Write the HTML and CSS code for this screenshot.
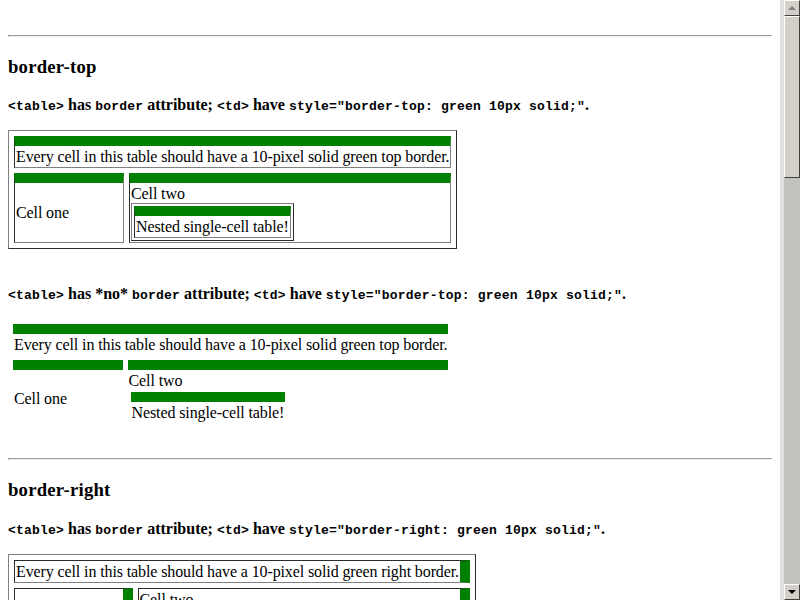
FILE: index.html
```html
<!DOCTYPE html>
<html>
<head>
<meta charset="utf-8">
<title>border-top / border-right on table cells</title>
<link rel="stylesheet" href="styles.css">
</head>
<body>
<div class="window">
  <div class="page">
    <br>
    <hr>
    <h3 class="title">border-top</h3>
    <p class="desc"><code>&lt;table&gt;</code> has <code>border</code> attribute; <code>&lt;td&gt;</code> have <code>style="border-top: green 10px solid;"</code>.</p>
    <table class="outer bordered top">
      <tr><td colspan="2">Every cell in this table should have a 10-pixel solid green top border.</td></tr>
      <tr>
        <td>Cell one</td>
        <td>Cell two<table class="nested bordered top"><tr><td>Nested single-cell table!</td></tr></table></td>
      </tr>
    </table>
    <br>
    <p class="desc"><code>&lt;table&gt;</code> has *no* <code>border</code> attribute; <code>&lt;td&gt;</code> have <code>style="border-top: green 10px solid;"</code>.</p>
    <table class="outer top">
      <tr><td colspan="2">Every cell in this table should have a 10-pixel solid green top border.</td></tr>
      <tr>
        <td>Cell one</td>
        <td>Cell two<table class="nested top"><tr><td>Nested single-cell table!</td></tr></table></td>
      </tr>
    </table>
    <br>
    <hr>
    <h3 class="title">border-right</h3>
    <p class="desc"><code>&lt;table&gt;</code> has <code>border</code> attribute; <code>&lt;td&gt;</code> have <code>style="border-right: green 10px solid;"</code>.</p>
    <table class="outer bordered right">
      <tr><td colspan="2">Every cell in this table should have a 10-pixel solid green right border.</td></tr>
      <tr>
        <td>Cell one</td>
        <td>Cell two<table class="nested bordered right"><tr><td>Nested single-cell table!</td></tr></table></td>
      </tr>
    </table>
    <br>
    <p class="desc"><code>&lt;table&gt;</code> has *no* <code>border</code> attribute; <code>&lt;td&gt;</code> have <code>style="border-right: green 10px solid;"</code>.</p>
  </div>
  <div class="scrollbar">
    <div class="sb-btn"><span class="arrow-up"></span></div>
    <div class="sb-thumb"></div>
    <div class="sb-track"></div>
    <div class="sb-btn"><span class="arrow-down"></span></div>
  </div>
</div>
</body>
</html>
```
FILE: styles.css
```css
html, body {
  margin: 0;
  padding: 0;
  overflow: hidden;
  background: #ffffff;
}

body {
  font-family: "Liberation Serif", "Times New Roman", serif;
  font-size: 16px;
  line-height: 19px;
  letter-spacing: -0.11px;
  color: #000000;
}

.window {
  display: flex;
  height: 600px;
  overflow: hidden;
}

.page {
  flex: 1;
  min-width: 0;
  padding: 8px;
  overflow: hidden;
}

.title {
  font-size: 18.72px;
  line-height: 21px;
  letter-spacing: 0.2px;
  font-weight: bold;
  margin: 18.72px 0;
}

.desc {
  font-weight: bold;
  letter-spacing: 0;
  margin: 16px 0;
}

code {
  font-family: "Liberation Mono", "Courier New", monospace;
  font-size: 13px;
  line-height: 1;
  letter-spacing: 0.2px;
}

table {
  border-collapse: separate;
}

table.outer {
  border-spacing: 5px;
}

table.nested {
  border-spacing: 2px;
}

td {
  padding: 1px;
}

table.bordered {
  border: 1px outset gray;
}

table.bordered > tbody > tr > td {
  border: 1px inset gray;
}

table.top > tbody > tr > td {
  border-top: 10px solid green;
}

table.right > tbody > tr > td {
  border-right: 10px solid green;
}

/* scrollbar chrome */
.scrollbar {
  width: 16px;
  border-left: 4px solid #e0dfe3;
  background: #c4c2bc;
  display: flex;
  flex-direction: column;
}

.sb-btn {
  height: 16px;
  box-sizing: border-box;
  background: #d4d0c8;
  border: 1px solid;
  border-color: #ffffff #404040 #404040 #ffffff;
  display: flex;
  align-items: center;
  justify-content: center;
}

.sb-thumb {
  height: 162px;
  box-sizing: border-box;
  background: #d4d0c8;
  border: 1px solid;
  border-color: #ffffff #404040 #404040 #ffffff;
}

.sb-track {
  flex: 1;
}

.arrow-up {
  width: 0;
  height: 0;
  border-left: 4px solid transparent;
  border-right: 4px solid transparent;
  border-bottom: 4px solid #808080;
}

.arrow-down {
  width: 0;
  height: 0;
  border-left: 4px solid transparent;
  border-right: 4px solid transparent;
  border-top: 4px solid #000000;
}
```
